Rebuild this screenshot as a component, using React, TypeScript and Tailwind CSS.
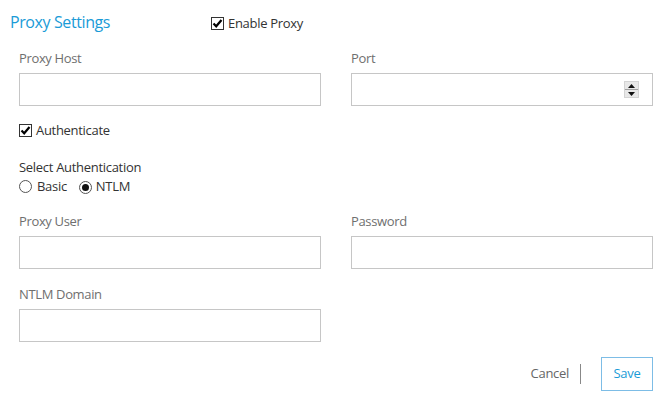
import React from "react";

function Check() {
  return (
    <span className="inline-flex w-[13px] h-[13px] border border-[#333] bg-white items-center justify-center shrink-0">
      <svg width="11" height="11" viewBox="0 0 11 11">
        <path d="M1.5 5.5 L4.2 8.3 L9.5 2" stroke="#000" strokeWidth="2.2" fill="none" />
      </svg>
    </span>
  );
}

function Radio({ on }: { on?: boolean }) {
  return (
    <span className="inline-flex w-[13px] h-[13px] rounded-full border border-[#555] bg-white items-center justify-center shrink-0">
      {on && <span className="w-[7px] h-[7px] rounded-full bg-[#111]" />}
    </span>
  );
}

function Field({ label, spinner }: { label: string; spinner?: boolean }) {
  return (
    <div className="w-[302px]">
      <div className="h-[16px] leading-[16px] text-[13px] tracking-[-0.35px] text-[#6f6f6f]">{label}</div>
      <div className="mt-[7px] h-[33px] border border-[#c6c6c6] bg-white flex items-center justify-end pr-[13px]">
        {spinner && (
          <div className="w-[15px] h-[17px] bg-[#e8e8e8] border border-[#d4d4d4] flex flex-col">
            <div className="flex-1 flex items-center justify-center">
              <svg width="7" height="4" viewBox="0 0 7 4"><path d="M0 4 L3.5 0 L7 4Z" fill="#111" /></svg>
            </div>
            <div className="h-px bg-[#a0a0a0]" />
            <div className="flex-1 flex items-center justify-center">
              <svg width="7" height="4" viewBox="0 0 7 4"><path d="M0 0 L3.5 4 L7 0Z" fill="#111" /></svg>
            </div>
          </div>
        )}
      </div>
    </div>
  );
}

export default function App() {
  return (
    <div className="w-[662px] h-[401px] bg-white font-['Open_Sans',sans-serif] text-[#333] tracking-[-0.3px]">
      <div className="pt-[12px] flex items-center h-[32px]">
        <div className="ml-[10px] w-[201px] text-[16px] leading-[20px] tracking-[-0.4px] text-[#1a9bd7]">Proxy Settings</div>
        <div className="flex items-center gap-[4px] text-[13px] leading-[13px] mt-[2px]">
          <Check />
          <span>Enable Proxy</span>
        </div>
      </div>
      <div className="pl-[19px]">
        <div className="mt-[18px] flex gap-[30px]">
          <Field label="Proxy Host" />
          <Field label="Port" spinner />
        </div>
        <div className="mt-[18px] flex items-center gap-[4px] h-[13px] text-[13px] leading-[13px]">
          <Check />
          <span>Authenticate</span>
        </div>
        <div className="mt-[22px] h-[16px] leading-[16px] text-[13px]">Select Authentication</div>
        <div className="mt-[5px] flex items-center h-[13px] text-[13px] leading-[13px]">
          <Radio />
          <span className="ml-[5px]">Basic</span>
          <span className="ml-[12px]"><Radio on /></span>
          <span className="ml-[4px]">NTLM</span>
        </div>
        <div className="mt-[20px] flex gap-[30px]">
          <Field label="Proxy User" />
          <Field label="Password" />
        </div>
        <div className="mt-[17px]">
          <Field label="NTLM Domain" />
        </div>
      </div>
      <div className="mt-[15px] flex items-center justify-end pr-[9px]">
        <span className="text-[13px] text-[#666]">Cancel</span>
        <span className="ml-[11px] w-px h-[20px] bg-[#888]" />
        <button className="ml-[20px] w-[52px] h-[34px] border border-[#7dbde6] text-[13px] text-[#1a9bd7] bg-white">Save</button>
      </div>
    </div>
  );
}
